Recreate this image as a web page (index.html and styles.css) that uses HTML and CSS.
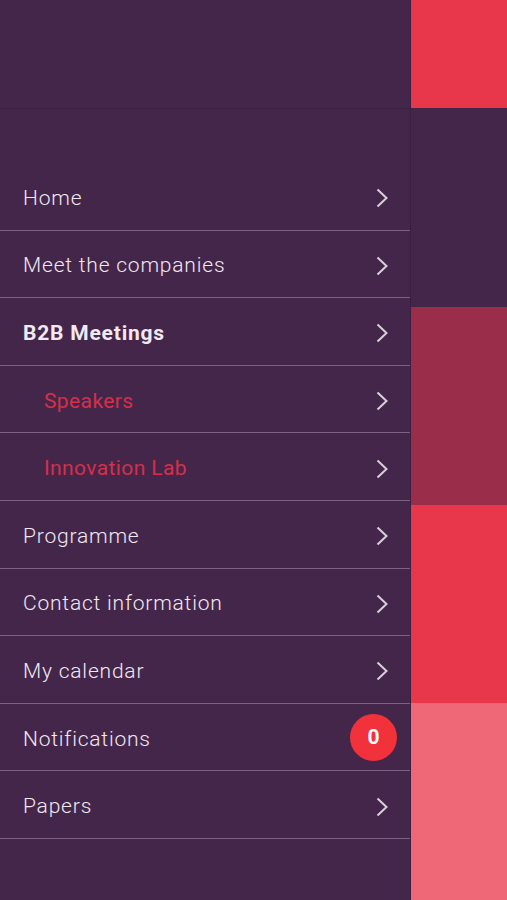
FILE: index.html
```html
<!DOCTYPE html>
<html>
<head>
<link rel="stylesheet" href="styles.css">
</head>
<body>

<div class="screen">

  <!-- Side menu -->
  <div class="menu">
    <div class="menu-header"></div>

    <ul class="menu-list">
      <li class="item"><span class="label">Home</span><svg class="chevron" viewBox="0 0 12 20"><polyline points="1.5,1.5 10.5,10 1.5,18.5"/></svg></li>
      <li class="item"><span class="label">Meet the companies</span><svg class="chevron" viewBox="0 0 12 20"><polyline points="1.5,1.5 10.5,10 1.5,18.5"/></svg></li>
      <li class="item active"><span class="label">B2B Meetings</span><svg class="chevron" viewBox="0 0 12 20"><polyline points="1.5,1.5 10.5,10 1.5,18.5"/></svg></li>
      <li class="item sub"><span class="label">Speakers</span><svg class="chevron" viewBox="0 0 12 20"><polyline points="1.5,1.5 10.5,10 1.5,18.5"/></svg></li>
      <li class="item sub"><span class="label">Innovation Lab</span><svg class="chevron" viewBox="0 0 12 20"><polyline points="1.5,1.5 10.5,10 1.5,18.5"/></svg></li>
      <li class="item"><span class="label">Programme</span><svg class="chevron" viewBox="0 0 12 20"><polyline points="1.5,1.5 10.5,10 1.5,18.5"/></svg></li>
      <li class="item"><span class="label">Contact information</span><svg class="chevron" viewBox="0 0 12 20"><polyline points="1.5,1.5 10.5,10 1.5,18.5"/></svg></li>
      <li class="item"><span class="label">My calendar</span><svg class="chevron" viewBox="0 0 12 20"><polyline points="1.5,1.5 10.5,10 1.5,18.5"/></svg></li>
      <li class="item"><span class="label">Notifications</span><span class="badge">0</span></li>
      <li class="item"><span class="label">Papers</span><svg class="chevron" viewBox="0 0 12 20"><polyline points="1.5,1.5 10.5,10 1.5,18.5"/></svg></li>
    </ul>
  </div>

  <!-- Page behind the menu -->
  <div class="behind">
    <div class="tile red top"></div>
    <div class="tile plum"></div>
    <div class="tile wine"></div>
    <div class="tile red"></div>
    <div class="tile pink"></div>
  </div>

</div>

</body>
</html>
```

FILE: styles.css
```css
html, body {
    margin: 0;
    padding: 0;
    background-color: #45264b;
}

body {
    font-family: Roboto, "Liberation Sans", sans-serif;
}

.screen {
    display: flex;
    width: 507px;
    height: 900px;
    overflow: hidden;
}

/* The Menu */
.menu {
    width: 411px;
    flex-shrink: 0;
    background-color: #45264b;
    border-right: 1px solid #3a1f40;
    box-sizing: border-box;
}

.menu-header {
    height: 109px;
    border-bottom: 1px solid #3a1f40;
    box-sizing: border-box;
}

.menu-list {
    list-style: none;
    margin: 54px 0 0 0;
    padding: 0;
}

.item {
    display: flex;
    align-items: center;
    justify-content: space-between;
    height: 67.6px;
    padding: 0 13px 0 23px;
    border-bottom: 1.5px solid #7b6282;
    box-sizing: border-box;
    color: #f1e9f2;
    font-size: 21px;
    font-weight: 300;
    letter-spacing: 0.8px;
}

.item .label {
    padding-top: 3px;
}

.item.active {
    font-weight: bold;
    letter-spacing: 0.8px;
}

.item.sub {
    padding-left: 44px;
    color: #d3304a;
    font-weight: 400;
    letter-spacing: 0.4px;
}

/* The Arrow */
.chevron {
    width: 12px;
    height: 20px;
    margin-right: 9px;
    margin-top: 4px;
    fill: none;
    stroke: #d9d0db;
    stroke-width: 2;
}

/* The Counter */
.badge {
    width: 47px;
    height: 47px;
    border-radius: 50%;
    background-color: #f2323a;
    color: #fff;
    font-size: 21px;
    font-weight: bold;
    letter-spacing: 0;
    display: flex;
    align-items: center;
    justify-content: center;
}

/* Content behind the menu */
.behind {
    flex: 1;
    display: flex;
    flex-direction: column;
}

.tile {
    height: 198px;
}

.tile.top {
    height: 108px;
}

.tile.red {
    background-color: #e8364a;
}

.tile.plum {
    height: 199px;
    background-color: #45264b;
}

.tile.wine {
    background-color: #9a2d4a;
}

.tile.pink {
    flex: 1;
    background-color: #ef6878;
}
```
